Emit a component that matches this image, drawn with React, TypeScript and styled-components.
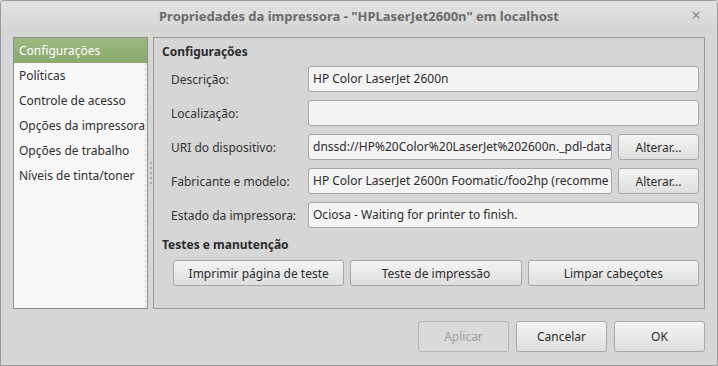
import styled, { createGlobalStyle } from "styled-components";

const GlobalStyle = createGlobalStyle`
  html, body {
    margin: 0;
    padding: 0;
    background: #d6d6d6;
  }
  body {
    font-family: "Noto Sans", "DejaVu Sans", sans-serif;
    font-size: 12px;
    color: #303030;
  }
`;

const sections = [
  "Configurações",
  "Políticas",
  "Controle de acesso",
  "Opções da impressora",
  "Opções de trabalho",
  "Níveis de tinta/toner",
];

const fields = [
  { label: "Descrição:", value: "HP Color LaserJet 2600n" },
  { label: "Localização:", value: "" },
  {
    label: "URI do dispositivo:",
    value: "dnssd://HP%20Color%20LaserJet%202600n._pdl-data",
    button: true,
  },
  {
    label: "Fabricante e modelo:",
    value: "HP Color LaserJet 2600n Foomatic/foo2hp (recomme",
    button: true,
  },
  { label: "Estado da impressora:", value: "Ociosa - Waiting for printer to finish." },
];

function App() {
  return (
    <>
      <GlobalStyle />
      <Window>
        <TitleBar>
          <Title>Propriedades da impressora - "HPLaserJet2600n" em localhost</Title>
          <Close>×</Close>
        </TitleBar>
        <Body>
          <Main>
            <Sidebar>
              {sections.map((s, i) => (
                <SideItem key={s} $selected={i === 0}>
                  {s}
                </SideItem>
              ))}
            </Sidebar>
            <Handle>
              {[0, 1, 2, 3, 4].map((i) => (
                <Dot key={i} />
              ))}
            </Handle>
            <Frame>
              <Heading>Configurações</Heading>
              <Form>
                {fields.map((f) => (
                  <Row key={f.label}>
                    <Label>{f.label}</Label>
                    <Field>
                      <Entry>{f.value}</Entry>
                      {f.button && <Button $width={81}>Alterar...</Button>}
                    </Field>
                  </Row>
                ))}
              </Form>
              <Heading $top={9}>Testes e manutenção</Heading>
              <TestRow>
                <Button>Imprimir página de teste</Button>
                <Button>Teste de impressão</Button>
                <Button>Limpar cabeçotes</Button>
              </TestRow>
            </Frame>
          </Main>
          <Actions>
            <DialogButton $disabled>Aplicar</DialogButton>
            <DialogButton>Cancelar</DialogButton>
            <DialogButton>OK</DialogButton>
          </Actions>
        </Body>
      </Window>
    </>
  );
}

export default App;

const Window = styled.div`
  width: 718px;
  height: 366px;
  box-sizing: border-box;
  border: 1px solid #9a9a9a;
  border-radius: 4px 4px 0 0;
  background: #d6d6d6;
  display: flex;
  flex-direction: column;
  overflow: hidden;
`;

const TitleBar = styled.div`
  height: 29px;
  flex: none;
  position: relative;
  display: flex;
  align-items: center;
  justify-content: center;
  background: linear-gradient(#e2e2e2, #d6d6d6);
`;

const Title = styled.div`
  font-weight: bold;
  font-size: 13px;
  color: #6b6b6b;
  padding-top: 1px;
`;

const Close = styled.div`
  position: absolute;
  right: 16px;
  top: 5px;
  font-size: 17px;
  color: #8a8a8a;
  line-height: 18px;
`;

const Body = styled.div`
  flex: 1;
  display: flex;
  flex-direction: column;
  padding: 7px 12px 12px 12px;
  min-width: 0;
`;

const Main = styled.div`
  display: flex;
  height: 272px;
  min-width: 0;
`;

const Sidebar = styled.div`
  width: 133px;
  flex: none;
  border: 1px solid #8e8e8e;
  background: #f7f7f7;
  display: flex;
  flex-direction: column;
  position: relative;
  &::after {
    content: "";
    position: absolute;
    right: 1px;
    top: 25px;
    bottom: 0;
    border-right: 1px dashed #d2d2d2;
  }
`;

const SideItem = styled.div<{ $selected?: boolean }>`
  height: 25px;
  line-height: 25px;
  padding-left: 5px;
  white-space: nowrap;
  overflow: hidden;
  color: ${(p) => (p.$selected ? "#ffffff" : "#303030")};
  background: ${(p) =>
    p.$selected ? "linear-gradient(#9cb97f, #8aa96c)" : "transparent"};
`;

const Handle = styled.div`
  width: 5px;
  flex: none;
  display: flex;
  flex-direction: column;
  align-items: center;
  justify-content: center;
  gap: 3px;
`;

const Dot = styled.div`
  width: 2px;
  height: 2px;
  background: #a8a8a8;
`;

const Frame = styled.div`
  flex: 1;
  min-width: 0;
  border: 1px solid #9a9a9a;
  padding: 6px 5px 0 8px;
  display: flex;
  flex-direction: column;
`;

const Heading = styled.div<{ $top?: number }>`
  font-weight: bold;
  color: #2c2c2c;
  margin-top: ${(p) => p.$top ?? 0}px;
  line-height: 16px;
`;

const Form = styled.div`
  display: flex;
  flex-direction: column;
  gap: 8px;
  margin-top: 6px;
  padding-left: 9px;
`;

const Row = styled.div`
  display: flex;
  align-items: center;
  height: 26px;
  min-width: 0;
`;

const Label = styled.div`
  width: 137px;
  flex: none;
  color: #333;
`;

const Field = styled.div`
  flex: 1;
  min-width: 0;
  display: flex;
  gap: 6px;
  height: 100%;
`;

const Entry = styled.div`
  flex: 1;
  min-width: 0;
  box-sizing: border-box;
  height: 26px;
  line-height: 24px;
  padding: 0 4px;
  border: 1px solid #a6a6a6;
  border-radius: 3px;
  background: #f4f4f4;
  white-space: nowrap;
  overflow: hidden;
  color: #2c2c2c;
`;

const Button = styled.div<{ $width?: number }>`
  ${(p) => (p.$width ? `width: ${p.$width}px; flex: none;` : "flex: 1; min-width: 0;")}
  box-sizing: border-box;
  height: 26px;
  display: flex;
  align-items: center;
  justify-content: center;
  border: 1px solid #a8a8a8;
  border-radius: 3px;
  background: linear-gradient(#f4f4f4, #dedede);
  color: #2c2c2c;
  white-space: nowrap;
`;

const TestRow = styled.div`
  display: flex;
  gap: 6px;
  margin-top: 7px;
  padding: 0 0 0 11px;
`;

const Actions = styled.div`
  display: flex;
  justify-content: flex-end;
  gap: 7px;
  margin-top: 12px;
`;

const DialogButton = styled.div<{ $disabled?: boolean }>`
  width: 91px;
  height: 31px;
  box-sizing: border-box;
  display: flex;
  align-items: center;
  justify-content: center;
  border: 1px solid ${(p) => (p.$disabled ? "#b4b4b4" : "#a8a8a8")};
  border-radius: 3px;
  background: ${(p) =>
    p.$disabled ? "#dadada" : "linear-gradient(#f4f4f4, #dedede)"};
  color: ${(p) => (p.$disabled ? "#a0a0a0" : "#2c2c2c")};
`;
